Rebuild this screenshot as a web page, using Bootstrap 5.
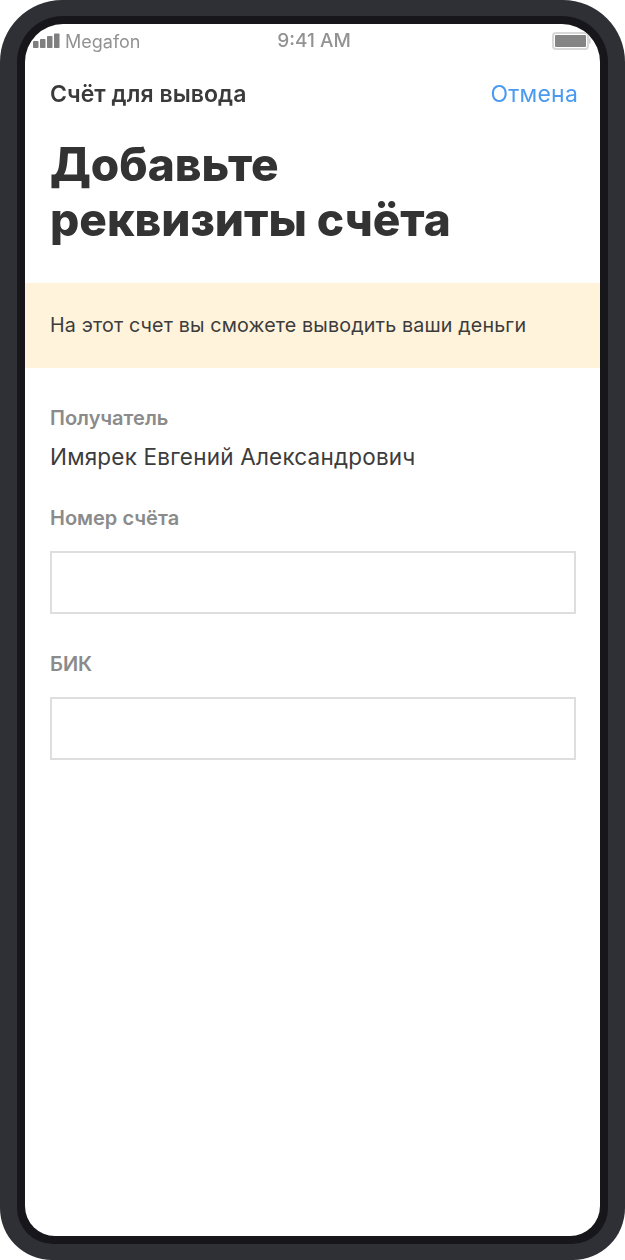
<!DOCTYPE html>
<html lang="ru">
<head>
<meta charset="utf-8">
<title>Счёт для вывода</title>
<link rel="stylesheet" href="https://cdn.jsdelivr.net/npm/bootstrap@5.3.0/dist/css/bootstrap.min.css">
<style>
html,body{margin:0;background:#fff;}
body{width:625px;height:1260px;overflow:hidden;font-family:Inter,"Liberation Sans",sans-serif;color:#333;}
.phone-shell{width:625px;height:1260px;background:#2e3035;border-radius:62px 62px 52px 52px;padding:16px 17px 16px 17px;}
.phone-bezel{height:100%;background:#17161b;border-radius:46px 46px 36px 36px;padding:8px;}
.phone-screen{height:100%;background:#fff;border-radius:38px 38px 30px 30px;overflow:hidden;}
.status-row{height:34px;padding:0 9px 0 8px;color:#929292;filter:blur(.4px);}
.status-carrier{width:174px;font-size:18px;}
.status-time{font-size:19px;font-weight:500;}
.status-end{width:170px;}
.head-row{padding:20px 22px 0 25px;height:56px;filter:blur(.3px);}
.head-title{font-size:23px;font-weight:600;color:#3a3a3a;line-height:32px;letter-spacing:.05px;}
.head-cancel{font-size:23px;color:#4a9af0;line-height:32px;text-decoration:none;letter-spacing:.2px;}
.page-heading{font-size:46px;line-height:55px;font-weight:800;color:#333;margin:23px 0 0;padding:0 25px;letter-spacing:-.02px;filter:blur(.4px);}
.notice-band{background:#fff3dc;height:85px;margin-top:36px;padding:0 25px;font-size:19.7px;color:#3c3c3c;letter-spacing:.15px;}
.field-area{padding:35px 25px 0;}
.field-label{font-size:20px;font-weight:600;color:#8b8b8b;line-height:30px;margin:0;}
.field-value{font-size:22.5px;color:#3c3c3c;line-height:32px;margin-top:8px;letter-spacing:.2px;}
.label-acct{margin-top:30px;}
.label-bik{margin-top:35px;}
.field-input{width:526px;height:63px;margin-top:18px;border:2px solid #dedede;border-radius:0;background:#fff;box-shadow:none;}
</style>
</head>
<body>
<div class="phone-shell">
  <div class="phone-bezel">
    <div class="phone-screen d-flex flex-column">
      <div class="status-row d-flex align-items-center justify-content-between">
        <div class="status-carrier d-flex align-items-center gap-1">
          <svg width="28" height="16" viewBox="0 0 28 16" aria-hidden="true"><g fill="#7f7f7f"><rect x="0" y="8" width="5.5" height="7" rx=".8"/><rect x="7" y="6" width="5.5" height="9" rx=".8"/><rect x="14" y="3" width="5.5" height="12" rx=".8"/><rect x="21" y="0.5" width="5.5" height="14.5" rx=".8"/></g></svg>
          <span>Megafon</span>
        </div>
        <div class="status-time">9:41 AM</div>
        <div class="status-end d-flex justify-content-end">
          <svg width="39" height="18" viewBox="0 0 39 18" aria-hidden="true"><rect x="1" y="1" width="35" height="16" rx="3" fill="#fff" stroke="#d8d8d8" stroke-width="2"/><rect x="3" y="3" width="31" height="12" rx="1" fill="#858585"/><rect x="37" y="6.5" width="1.6" height="5" fill="#d0d0d0"/></svg>
        </div>
      </div>
      <div class="head-row d-flex justify-content-between align-items-start">
        <div class="head-title">Счёт для вывода</div>
        <a class="head-cancel" href="#">Отмена</a>
      </div>
      <h1 class="page-heading">Добавьте<br>реквизиты счёта</h1>
      <div class="notice-band d-flex align-items-center">На этот счет вы сможете выводить ваши деньги</div>
      <div class="field-area">
        <p class="field-label">Получатель</p>
        <div class="field-value">Имярек Евгений Александрович</div>
        <label class="field-label label-acct d-block" for="acct">Номер счёта</label>
        <input id="acct" class="form-control field-input" type="text">
        <label class="field-label label-bik d-block" for="bik">БИК</label>
        <input id="bik" class="form-control field-input" type="text">
      </div>
    </div>
  </div>
</div>
<script src="https://cdn.jsdelivr.net/npm/bootstrap@5.3.0/dist/js/bootstrap.bundle.min.js"></script>
</body>
</html>
